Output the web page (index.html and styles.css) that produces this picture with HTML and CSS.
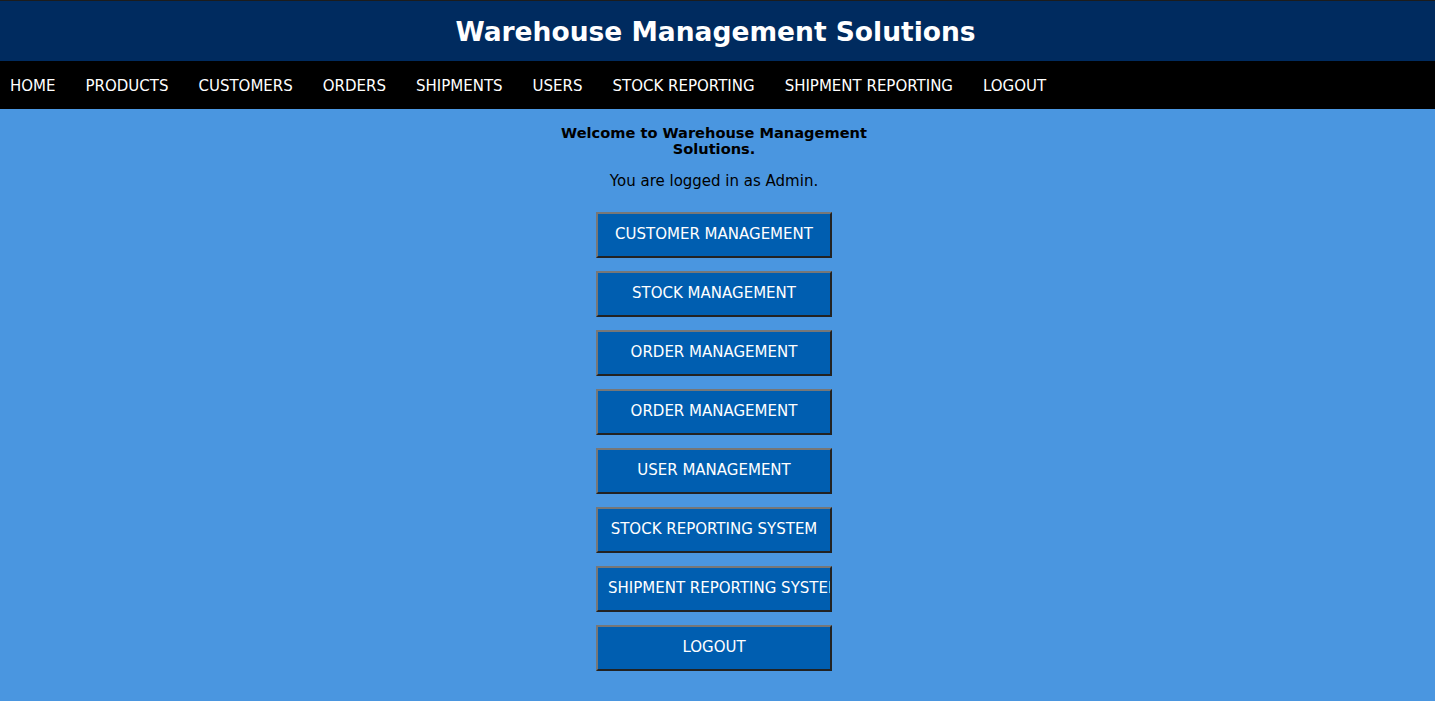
FILE: index.html
```html
<!DOCTYPE html>
<html>
<head>
<meta charset="utf-8">
<title>Warehouse Management Solutions</title>
<link rel="stylesheet" href="styles.css">
</head>
<body>
<header class="site-header">
  <h1 class="site-title">Warehouse Management Solutions</h1>
</header>
<nav class="main-nav">
  <a href="#">HOME</a>
  <a href="#">PRODUCTS</a>
  <a href="#">CUSTOMERS</a>
  <a href="#">ORDERS</a>
  <a href="#">SHIPMENTS</a>
  <a href="#">USERS</a>
  <a href="#">STOCK REPORTING</a>
  <a href="#">SHIPMENT REPORTING</a>
  <a href="#">LOGOUT</a>
</nav>
<main class="content">
  <h2 class="welcome">Welcome to Warehouse Management Solutions.</h2>
  <p class="logged">You are logged in as Admin.</p>
  <div class="menu">
    <button class="menu-btn">CUSTOMER MANAGEMENT</button>
    <button class="menu-btn">STOCK MANAGEMENT</button>
    <button class="menu-btn">ORDER MANAGEMENT</button>
    <button class="menu-btn">ORDER MANAGEMENT</button>
    <button class="menu-btn">USER MANAGEMENT</button>
    <button class="menu-btn">STOCK REPORTING SYSTEM</button>
    <button class="menu-btn">SHIPMENT REPORTING SYSTEM</button>
    <button class="menu-btn">LOGOUT</button>
  </div>
</main>
</body>
</html>
```

FILE: styles.css
```css
html, body {
  margin: 0;
  padding: 0;
  height: 100%;
}
body {
  background: #4a96e0;
  font-family: "DejaVu Sans", Verdana, sans-serif;
  color: #000;
}
.site-header {
  background: #002b5f;
  border-top: 1px solid #1c1c1c;
  height: 60px;
  display: flex;
  align-items: center;
  justify-content: center;
}
.site-title {
  margin: 0;
  color: #fff;
  font-size: 26.5px;
  font-weight: bold;
  transform: translateX(-2px);
}
.main-nav {
  background: #000;
  height: 48px;
  display: flex;
  align-items: center;
  padding-left: 10px;
  gap: 30px;
}
.main-nav a {
  color: #fff;
  text-decoration: none;
  font-size: 15px;
  line-height: 18px;
  padding-top: 2px;
}
.content {
  display: flex;
  flex-direction: column;
  align-items: center;
  padding-top: 16px;
  padding-right: 7px;
}
.welcome {
  width: 330px;
  margin: 0;
  text-align: center;
  font-size: 14.6px;
  line-height: 16px;
  font-weight: bold;
}
.logged {
  margin: 16px 0 0;
  font-size: 15px;
  line-height: 16px;
}
.menu {
  display: flex;
  flex-direction: column;
  gap: 13px;
  margin-top: 23px;
}
.menu-btn {
  width: 236px;
  height: 46px;
  background: #005eb0;
  color: #fff;
  border: 2px solid;
  border-color: #777 #222 #222 #777;
  font-family: "DejaVu Sans", Verdana, sans-serif;
  font-size: 15px;
  padding: 0 10px 2px;
  white-space: nowrap;
  overflow: hidden;
  text-align: center;
}
```
